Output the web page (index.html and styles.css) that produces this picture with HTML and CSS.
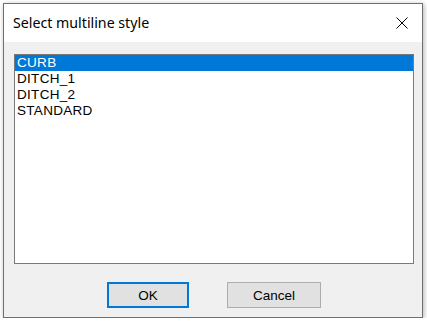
FILE: index.html
```html
<!DOCTYPE html>
<html lang="en">
<head>
    <meta charset="UTF-8">
    <title>Select multiline style</title>
    <link rel="stylesheet" href="styles.css">
</head>
<body>
    <div class="dialog">
        <div class="titlebar">
            <span class="title">Select multiline style</span>
            <span class="close-btn">
                <svg width="12" height="12" viewBox="0 0 12 12">
                    <path d="M0.5 0.5 L11.5 11.5 M11.5 0.5 L0.5 11.5" stroke="#000" stroke-width="1" fill="none"/>
                </svg>
            </span>
        </div>

        <div class="body">
            <ul class="listbox">
                <li class="selected">CURB</li>
                <li>DITCH_1</li>
                <li>DITCH_2</li>
                <li>STANDARD</li>
            </ul>

            <div class="buttons">
                <button class="btn btn-ok">OK</button>
                <button class="btn btn-cancel">Cancel</button>
            </div>
        </div>
    </div>
</body>
</html>
```

FILE: styles.css
```css
* {
    margin: 0;
    padding: 0;
    box-sizing: border-box;
}

body {
    background-color: #ffffff;
    font-family: 'Liberation Sans', Arial, sans-serif;
}

.dialog {
    width: 420px;
    height: 315px;
    margin: 3px 0 0 3px;
    border: 1px solid #6f6f6f;
    background-color: #f0f0f0;
    box-shadow: 1px 1px 5px rgba(0, 0, 0, 0.3);
    display: flex;
    flex-direction: column;
}

.titlebar {
    height: 38px;
    background-color: white;
    display: flex;
    justify-content: space-between;
    align-items: center;
    padding-left: 9px;
}

.title {
    font-family: 'Noto Sans', sans-serif;
    font-size: 14.2px;
    color: #000;
    margin-top: -1px;
}

.close-btn {
    width: 40px;
    height: 38px;
    display: flex;
    justify-content: center;
    align-items: center;
}

.body {
    flex: 1;
    padding: 12px 8px 0 10px;
}

.listbox {
    list-style: none;
    width: 400px;
    height: 210px;
    border: 1px solid #7a7a7a;
    background-color: white;
}

.listbox li {
    height: 16px;
    line-height: 16px;
    padding-left: 2px;
    font-size: 13.5px;
    letter-spacing: 0.3px;
    color: #000;
}

.listbox li.selected {
    background-color: #0078d7;
    color: white;
}

.buttons {
    display: flex;
    gap: 38px;
    margin-top: 18px;
    padding-left: 93px;
}

.btn {
    height: 26px;
    font-family: 'Liberation Sans', Arial, sans-serif;
    font-size: 13.5px;
    color: #000;
    background-color: #e1e1e1;
}

.btn-ok {
    width: 82px;
    border: 2px solid #0078d7;
}

.btn-cancel {
    width: 94px;
    border: 1px solid #adadad;
}
```
